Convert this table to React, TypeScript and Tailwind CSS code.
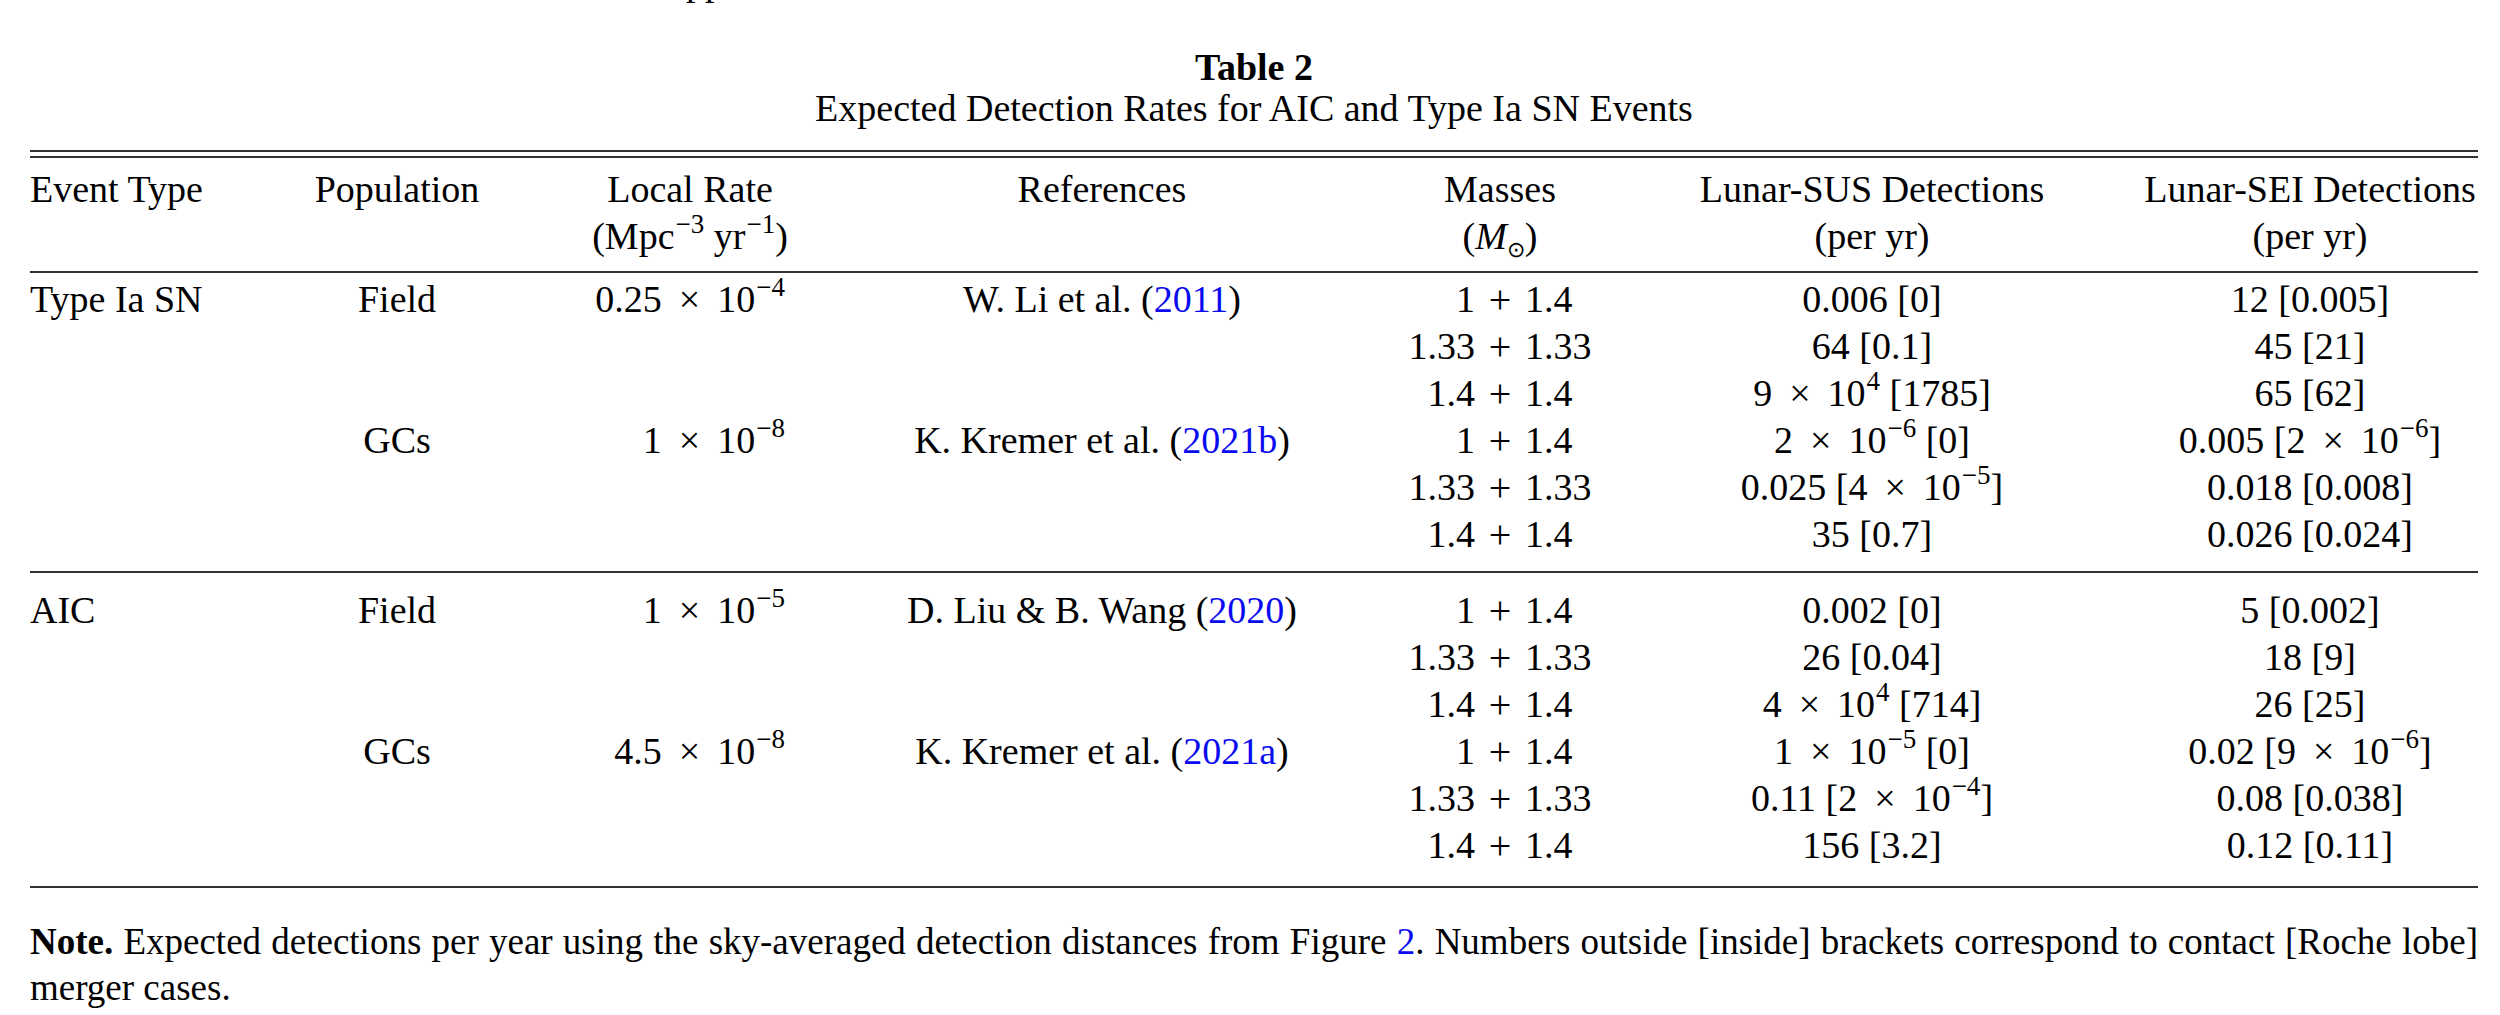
import React from "react";

const Sup = ({ children }: { children: React.ReactNode }) => (
  <span className="ml-[1px] text-[27px] leading-[20px] align-[16px]">{children}</span>
);

const X = () => <span className="mx-[17px]">×</span>;

const Sci = ({ m, e }: { m: string; e: string }) => (
  <>
    {m}
    <X />
    10
    <Sup>{e}</Sup>
  </>
);

const Blue = ({ children }: { children: React.ReactNode }) => (
  <span className="text-[#0a0af0]">{children}</span>
);

type Row = {
  ev?: string;
  pop?: string;
  rate?: React.ReactNode;
  ref?: React.ReactNode;
  mass: [string, string];
  sus: React.ReactNode;
  sei: React.ReactNode;
};

const section1: Row[] = [
  {
    ev: "Type Ia SN",
    pop: "Field",
    rate: <Sci m="0.25" e="−4" />,
    ref: (
      <>
        W. Li et al. (<Blue>2011</Blue>)
      </>
    ),
    mass: ["1", "1.4"],
    sus: "0.006 [0]",
    sei: "12 [0.005]",
  },
  { mass: ["1.33", "1.33"], sus: "64 [0.1]", sei: "45 [21]" },
  {
    mass: ["1.4", "1.4"],
    sus: (
      <>
        9<X />
        10<Sup>4</Sup> [1785]
      </>
    ),
    sei: "65 [62]",
  },
  {
    pop: "GCs",
    rate: <Sci m="1" e="−8" />,
    ref: (
      <>
        K. Kremer et al. (<Blue>2021b</Blue>)
      </>
    ),
    mass: ["1", "1.4"],
    sus: (
      <>
        <Sci m="2" e="−6" /> [0]
      </>
    ),
    sei: (
      <>
        0.005 [<Sci m="2" e="−6" />]
      </>
    ),
  },
  {
    mass: ["1.33", "1.33"],
    sus: (
      <>
        0.025 [<Sci m="4" e="−5" />]
      </>
    ),
    sei: "0.018 [0.008]",
  },
  { mass: ["1.4", "1.4"], sus: "35 [0.7]", sei: "0.026 [0.024]" },
];

const section2: Row[] = [
  {
    ev: "AIC",
    pop: "Field",
    rate: <Sci m="1" e="−5" />,
    ref: (
      <>
        D. Liu &amp; B. Wang (<Blue>2020</Blue>)
      </>
    ),
    mass: ["1", "1.4"],
    sus: "0.002 [0]",
    sei: "5 [0.002]",
  },
  { mass: ["1.33", "1.33"], sus: "26 [0.04]", sei: "18 [9]" },
  {
    mass: ["1.4", "1.4"],
    sus: (
      <>
        4<X />
        10<Sup>4</Sup> [714]
      </>
    ),
    sei: "26 [25]",
  },
  {
    pop: "GCs",
    rate: <Sci m="4.5" e="−8" />,
    ref: (
      <>
        K. Kremer et al. (<Blue>2021a</Blue>)
      </>
    ),
    mass: ["1", "1.4"],
    sus: (
      <>
        <Sci m="1" e="−5" /> [0]
      </>
    ),
    sei: (
      <>
        0.02 [<Sci m="9" e="−6" />]
      </>
    ),
  },
  {
    mass: ["1.33", "1.33"],
    sus: (
      <>
        0.11 [<Sci m="2" e="−4" />]
      </>
    ),
    sei: "0.08 [0.038]",
  },
  { mass: ["1.4", "1.4"], sus: "156 [3.2]", sei: "0.12 [0.11]" },
];

const GRID =
  "grid grid-cols-[260px_214px_372px_452px_344px_400px_406px] whitespace-nowrap";

const Rule = ({ className = "" }: { className?: string }) => (
  <div className={"h-[2px] bg-[#333] " + className} />
);

const DataRow = ({ r }: { r: Row }) => (
  <div className={GRID + " h-[47px] leading-[47px]"}>
    <div className="text-left">{r.ev ?? ""}</div>
    <div className="text-center">{r.pop ?? ""}</div>
    <div className="text-right pr-[91px]">{r.rate ?? ""}</div>
    <div className="text-center">{r.ref ?? ""}</div>
    <div className="flex justify-center">
      <span className="w-[90px] text-right">{r.mass[0]}</span>
      <span className="w-[50px] text-center text-[40px]">+</span>
      <span className="w-[90px] text-left">{r.mass[1]}</span>
    </div>
    <div className="text-center">{r.sus}</div>
    <div className="text-center pl-[70px]">{r.sei}</div>
  </div>
);

export default function App() {
  return (
    <div className="w-[2500px] h-[1015px] overflow-hidden bg-white text-black font-['Liberation_Serif','Times_New_Roman',serif] text-[38px]">
      <div className="pl-[30px] w-[2478px]">
        <div className="-mt-[38px] h-[41px] leading-[41px] pl-[656px]">pp</div>
        <div className="mt-[44px] text-center font-bold leading-[41px]">Table 2</div>
        <div className="text-center leading-[41px]">
          Expected Detection Rates for AIC and Type Ia SN Events
        </div>
        <Rule className="mt-[21px]" />
        <Rule className="mt-[4px]" />
        <div className={GRID + " mt-[8px] leading-[47px]"}>
          <div className="text-left">Event Type</div>
          <div className="text-center">Population</div>
          <div className="text-center">
            <div>Local Rate</div>
            <div>
              (Mpc<Sup>−3</Sup> yr<Sup>−1</Sup>)
            </div>
          </div>
          <div className="text-center">References</div>
          <div className="text-center">
            <div>Masses</div>
            <div>
              (<i>M</i>
              <span className="text-[22px] leading-[20px] align-[-8px]">⊙</span>)
            </div>
          </div>
          <div className="text-center">
            <div>Lunar-SUS Detections</div>
            <div>(per yr)</div>
          </div>
          <div className="text-center pl-[70px]">
            <div>Lunar-SEI Detections</div>
            <div>(per yr)</div>
          </div>
        </div>
        <Rule className="mt-[11px]" />
        <div className="mt-[3px]">
          {section1.map((r, i) => (
            <DataRow key={i} r={r} />
          ))}
        </div>
        <Rule className="mt-[13px]" />
        <div className="mt-[14px]">
          {section2.map((r, i) => (
            <DataRow key={i} r={r} />
          ))}
        </div>
        <Rule className="mt-[17px]" />
        <p className="mt-[31px] text-[37px] leading-[46px] text-justify">
          <span className="font-bold">Note.</span> Expected detections per year using the
          sky-averaged detection distances from Figure <Blue>2</Blue>. Numbers outside
          [inside] brackets correspond to contact [Roche lobe] merger cases.
        </p>
      </div>
    </div>
  );
}
